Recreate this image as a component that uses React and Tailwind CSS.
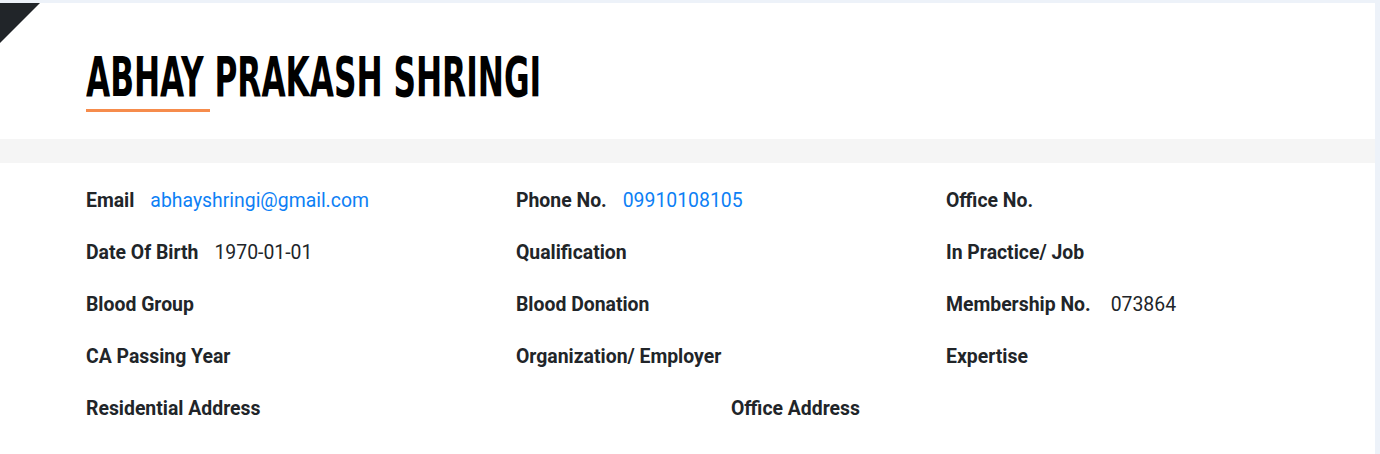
export default function App() {
  const label = "font-bold text-[19.4px] text-[#212529]";
  const val = "ml-4 text-[19.4px] text-[#212529]";
  const link = "ml-4 text-[19.4px] text-[#0d7ff5]";
  const rows = [
    [
      ["Email", "abhayshringi@gmail.com", true],
      ["Phone No.", "09910108105", true],
      ["Office No.", ""],
    ],
    [
      ["Date Of Birth", "1970-01-01"],
      ["Qualification", ""],
      ["In Practice/ Job", ""],
    ],
    [
      ["Blood Group", ""],
      ["Blood Donation", ""],
      ["Membership No.", "073864", false, true],
    ],
    [
      ["CA Passing Year", ""],
      ["Organization/ Employer", ""],
      ["Expertise", ""],
    ],
  ];
  return (
    <div className="w-[1380px] h-[454px] bg-[#edf2f9] pt-[3px] overflow-hidden" style={{ fontFamily: "Roboto, 'Liberation Sans', sans-serif" }}>
      <div className="w-[1375px] h-[451px] bg-white relative">
        <div className="absolute left-0 top-0 w-0 h-0 border-t-[40px] border-t-[#212529] border-r-[40px] border-r-transparent" />
        <div className="h-[136px] pl-[86px] pt-[46px]">
          <h1 className="inline-block text-[56px] leading-[56px] font-bold text-black origin-left scale-x-[0.62] tracking-[0px] whitespace-nowrap" style={{ fontFamily: "'DejaVu Sans Condensed', 'DejaVu Sans', sans-serif" }}>
            ABHAY PRAKASH SHRINGI
          </h1>
          <div className="mt-[4px] w-[124px] h-[3px] bg-[#f68c4c]" />
        </div>
        <div className="h-[24px] bg-[#f5f5f5]" />
        <div className="pl-[86px] pt-[25px]">
          {rows.map((r, i) => (
            <div key={i} className="grid grid-cols-[430px_430px_430px] h-[52px]">
              {r.map(([l, v, isLink, wide]) => (
                <div key={l} className="flex items-baseline leading-[26px]">
                  <span className={label}>{l}</span>
                  {v && <span className={(isLink ? link : val) + (wide ? " !ml-5" : "")}>{v}</span>}
                </div>
              ))}
            </div>
          ))}
          <div className="grid grid-cols-[645px_645px] h-[52px]">
            <div className="leading-[26px]"><span className={label}>Residential Address</span></div>
            <div className="leading-[26px]"><span className={label}>Office Address</span></div>
          </div>
        </div>
      </div>
    </div>
  );
}
